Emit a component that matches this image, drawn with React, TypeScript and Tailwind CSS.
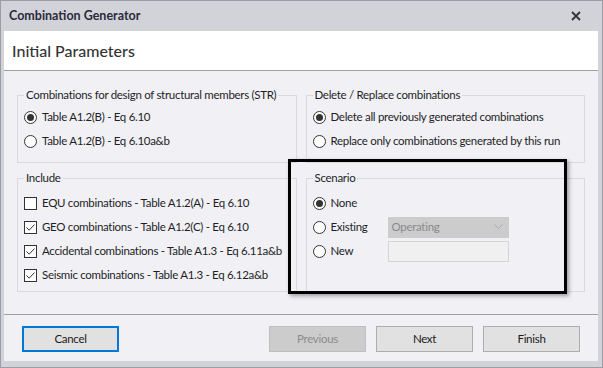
import React from 'react';

const Radio = ({ checked }: { checked?: boolean }) => (
  <span className="flex size-[13px] shrink-0 items-center justify-center rounded-full border border-[#333] bg-white">
    {checked && <span className="size-[7px] rounded-full bg-[#333]" />}
  </span>
);

const Check = ({ checked }: { checked?: boolean }) => (
  <span className="flex size-[13px] shrink-0 items-center justify-center border border-[#333] bg-white">
    {checked && (
      <svg width="11" height="11" viewBox="0 0 11 11" fill="none">
        <path d="M1.5 5.5 L4.2 8.2 L9.5 2.5" stroke="#333" strokeWidth="1" />
      </svg>
    )}
  </span>
);

const Option = ({ control, label }: { control: React.ReactNode; label: string }) => (
  <div className="flex h-[24px] items-center gap-[5px] whitespace-nowrap">
    {control}
    <span>{label}</span>
  </div>
);

const Group = ({ title, className, children }: { title: string; className?: string; children: React.ReactNode }) => (
  <fieldset className={`min-w-0 border border-[#dadada] px-[6px] ${className ?? ''}`}>
    <legend className="whitespace-nowrap px-[2px] leading-[16px]">{title}</legend>
    {children}
  </fieldset>
);

const Button = ({ label, primary, disabled }: { label: string; primary?: boolean; disabled?: boolean }) => (
  <button
    className={`h-[26px] w-[97px] ${
      primary
        ? 'border-2 border-[#0078d7] bg-[#e1e1e1] text-[#1a1a1a]'
        : disabled
        ? 'border border-[#bfbfbf] bg-[#cccccc] text-[#8d8d8d]'
        : 'border border-[#adadad] bg-[#e1e1e1] text-[#1a1a1a]'
    }`}
  >
    {label}
  </button>
);

export default function App() {
  return (
    <div className="relative flex h-[368px] w-[603px] flex-col border border-[#9c9ca4] bg-[#d2d3d8] pb-[6px] pl-[3px] pr-[4px] font-['Lato',sans-serif] text-[11.5px] tracking-[-0.3px] text-[#1e1e28]">
      <div className="flex h-[30px] shrink-0 items-center justify-between pl-[5px] pr-[17px]">
        <span className="text-[12.5px] font-bold tracking-[0px] text-[#2a2a3c]">Combination Generator</span>
        <svg width="10" height="10" viewBox="0 0 10 10">
          <path d="M1 1 L9 9 M9 1 L1 9" stroke="#333" strokeWidth="1.8" />
        </svg>
      </div>
      <div className="flex flex-1 flex-col bg-[#f1f1f5]">
        <div className="flex h-[40px] shrink-0 items-center border-b border-[#a0a0a0] bg-white pl-[8px]">
          <span className="text-[16px] font-medium tracking-[0px] text-[#333]">Initial Parameters</span>
        </div>
        <div className="grid flex-1 grid-cols-2 content-start gap-x-[9px] gap-y-[7px] px-[13px] pt-[16px]">
          <Group title="Combinations for design of structural members (STR)" className="h-[76px] pt-[2px]">
            <Option control={<Radio checked />} label="Table A1.2(B) - Eq 6.10" />
            <Option control={<Radio />} label="Table A1.2(B) - Eq 6.10a&b" />
          </Group>
          <Group title="Delete / Replace combinations" className="h-[76px] pt-[2px]">
            <Option control={<Radio checked />} label="Delete all previously generated combinations" />
            <Option control={<Radio />} label="Replace only combinations generated by this run" />
          </Group>
          <Group title="Include" className="h-[122px] pt-[5px]">
            <Option control={<Check />} label="EQU combinations - Table A1.2(A) - Eq 6.10" />
            <Option control={<Check checked />} label="GEO combinations - Table A1.2(C) - Eq 6.10" />
            <Option control={<Check checked />} label="Accidental combinations - Table A1.3 - Eq 6.11a&b" />
            <Option control={<Check checked />} label="Seismic combinations - Table A1.3 - Eq 6.12a&b" />
          </Group>
          <Group title="Scenario" className="h-[122px] pt-[5px]">
            <Option control={<Radio checked />} label="None" />
            <div className="flex h-[24px] items-center">
              <div className="flex w-[75px] items-center gap-[5px]">
                <Radio />
                <span>Existing</span>
              </div>
              <div className="flex h-[21px] w-[121px] items-center justify-between bg-[#cccccc] pl-[4px] pr-[6px] text-[#8a8a8a]">
                <span>Operating</span>
                <svg width="9" height="6" viewBox="0 0 9 6" fill="none">
                  <path d="M0.5 0.5 L4.5 4.5 L8.5 0.5" stroke="#aaa" strokeWidth="1" />
                </svg>
              </div>
            </div>
            <div className="flex h-[24px] items-center">
              <div className="flex w-[75px] items-center gap-[5px]">
                <Radio />
                <span>New</span>
              </div>
              <div className="h-[21px] w-[121px] border border-[#d4d4d4] bg-[#f0f0f0]" />
            </div>
          </Group>
        </div>
        <div className="flex h-[47px] shrink-0 items-start border-t border-[#a0a0a0] px-[18px] pt-[11px]">
          <Button label="Cancel" primary />
          <div className="ml-auto flex gap-[10px]">
            <Button label="Previous" disabled />
            <Button label="Next" />
            <Button label="Finish" />
          </div>
        </div>
      </div>
      <div className="pointer-events-none absolute left-[287px] top-[158px] h-[135px] w-[279px] border-[3px] border-black shadow-[2px_2px_4px_rgba(0,0,0,0.35)]" />
    </div>
  );
}
